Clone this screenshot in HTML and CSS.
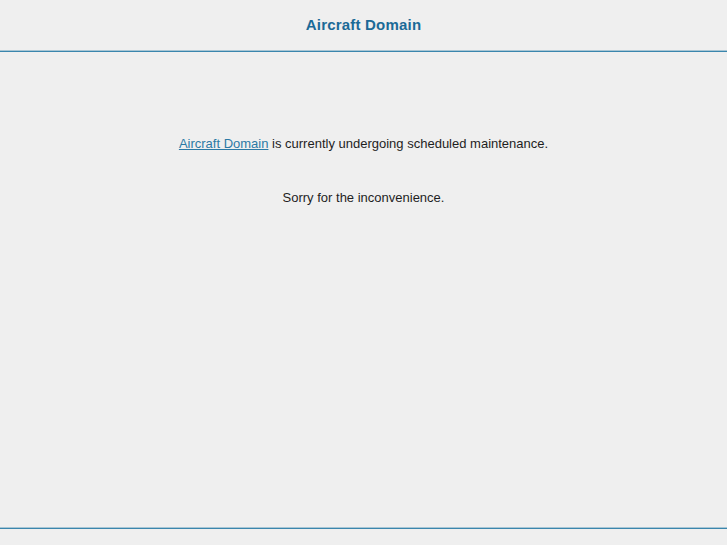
FILE: index.html
```html
<!DOCTYPE html>
<html lang="en">
<head>
    <meta charset="UTF-8">
    <title>Aircraft Domain</title>
    <link rel="stylesheet" href="styles.css">
</head>
<body>
    <div class="page">
        <div class="header">
            <h1 class="title">Aircraft Domain</h1>
        </div>
        <div class="content">
            <p><a href="#">Aircraft Domain</a> is currently undergoing scheduled maintenance.</p>
            <p>Sorry for the inconvenience.</p>
        </div>
        <div class="footer"></div>
    </div>
</body>
</html>
```

FILE: styles.css
```css
body {
    margin: 0;
    background: #efefef;
    font-family: 'Liberation Sans', Arial, sans-serif;
    color: #1e1e1e;
}

.page {
    display: flex;
    flex-direction: column;
    height: 545px;
}

.header {
    flex: none;
    height: 51px;
    border-bottom: 1px solid #3a86ad;
    box-shadow: inset 0 -1px 0 #a9c6d4;
    display: flex;
    align-items: center;
    justify-content: center;
}

.title {
    margin: 0 0 3px 0;
    font-size: 15px;
    font-weight: bold;
    letter-spacing: 0.2px;
    color: #1b6a97;
}

.content {
    flex: 1;
    text-align: center;
    font-size: 13px;
    padding-top: 84px;
}

.content p {
    margin: 0 0 38px 0;
    line-height: 16px;
}

.content a {
    color: #2c7aa5;
}

.footer {
    flex: none;
    height: 16px;
    border-top: 1px solid #3a86ad;
    box-shadow: 0 -1px 0 #a9c6d4;
}
```
